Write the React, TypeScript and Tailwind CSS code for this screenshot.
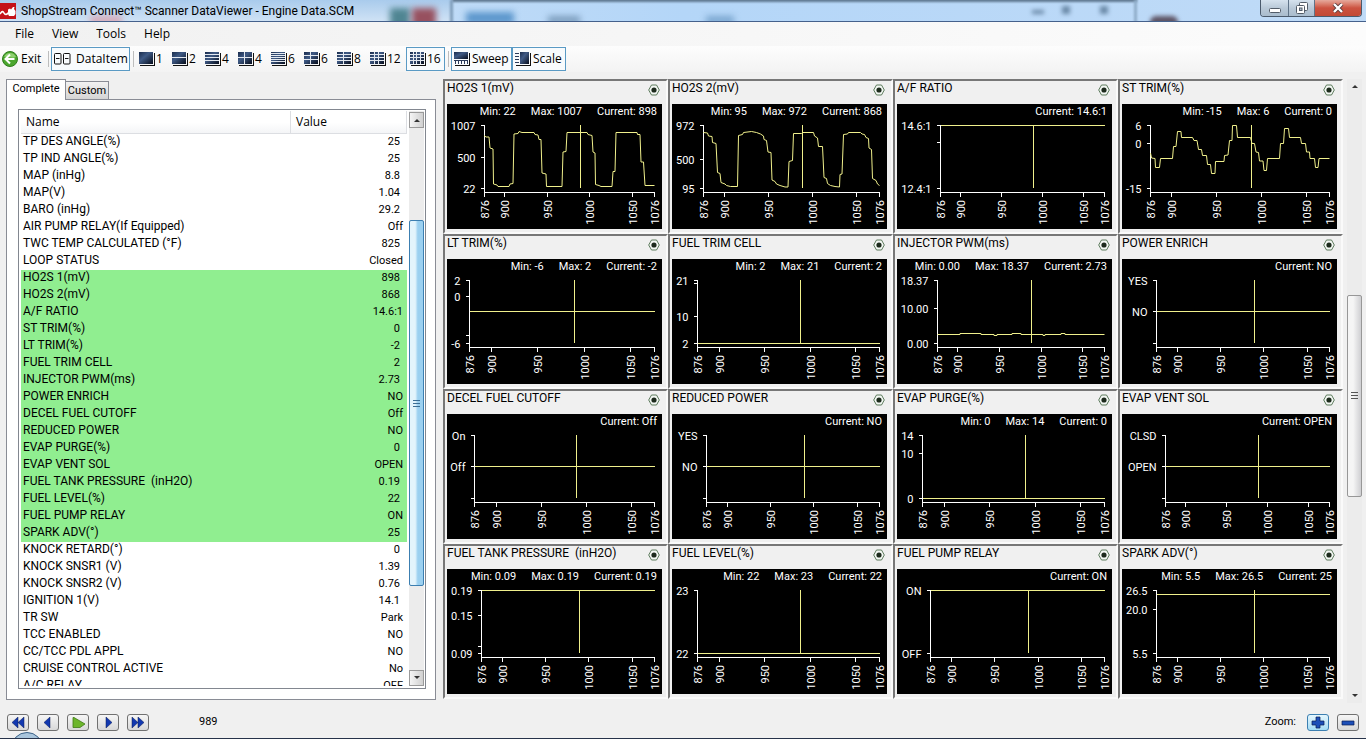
import React from 'react';

type Tick = [number, string];

interface Sensor {
    title: string;
    stats: string[];
    axisX: number;
    max: number;
    min: number;
    ticks: Tick[];
    level?: number;
    trace?: string;
}

interface Item {
    name: string;
    value: string;
    selected?: boolean;
}

const PLOT_RIGHT = 207.5;
const PLOT_TOP = 21.5;
const PLOT_BOTTOM = 84;
const CURSOR = 989;
const FRAMES = [876, 900, 950, 1000, 1050, 1076];

const sensors: Sensor[] = [
    {
        title: 'HO2S 1(mV)',
        stats: ['Min: 22', 'Max: 1007', 'Current: 898'],
        axisX: 37.5, max: 1007, min: 22,
        ticks: [[1007, '1007'], [500, '500'], [22, '22']],
        trace: '37,31.5 39,33 42,33 43,44 46,45 46.5,80 50,81 51,82.5 62,82.5 63,80 66,79.5 67,30 71,29.5 72,27.5 75,28.5 87,28.5 88,30.5 91,31 92,35.5 94,35.5 95,69 99,70 99.5,82.5 115,82.5 116,48 119,47.5 120,28.5 140,28.5 141,30.5 145,31.5 146,48 148,49 148.5,80.5 152,81.5 154,82.5 165,82.5 166,67.5 168,67.5 169,28.5 190,28.5 190.5,30.5 193,30.5 194,58 196.5,58 198,81.5 207.5,81.5',
    },
    {
        title: 'HO2S 2(mV)',
        stats: ['Min: 95', 'Max: 972', 'Current: 868'],
        axisX: 31.5, max: 972, min: 95,
        ticks: [[972, '972'], [500, '500'], [95, '95']],
        trace: '31.5,28.5 35.5,29 36.5,32 40,32.5 40.5,38.5 44,39.5 45.5,68.5 48,69.5 49,78.5 53,80 54.5,81.5 58.5,82.5 65.5,82.5 66.5,31.5 70.5,30.5 71.5,28.5 79.5,27.5 84.5,28.5 88.5,30 91.5,32 92,35.5 94.5,36.5 96,48 99,48.5 100,76 103,77.5 104.5,80 108,81.5 113,83 116,83 117,57.5 120.5,56.5 121.5,29.5 129.5,29.5 130.5,28.5 141.5,28.5 142.5,32 145.5,34 146.5,42.5 150.5,42.5 152,73.5 154.5,74.5 155.5,79.5 158.5,81.5 163,82.5 167.5,83 168,70.5 170,70 171.5,30.5 175.5,30 176.5,28.5 188.5,28.5 190,30 192.5,30.5 194,33.5 196.5,34.5 197,44 199.5,45.5 200.5,74.5 204,76.5 205.5,80 207.5,81.5',
    },
    {
        title: 'A/F RATIO',
        stats: ['Current: 14.6:1'],
        axisX: 43.5, max: 14.6, min: 12.4,
        ticks: [[14.6, '14.6:1'], [14, ''], [12.4, '12.4:1']],
        level: 14.6,
    },
    {
        title: 'ST TRIM(%)',
        stats: ['Min: -15', 'Max: 6', 'Current: 0'],
        axisX: 28.5, max: 6, min: -15,
        ticks: [[6, '6'], [0, '0'], [-15, '-15']],
        trace: '28.5,49 29.5,54 33,54.5 33.5,63.5 37.5,63.5 38.5,54.5 50.5,54.5 51.5,42.5 54,42.5 55.5,27.5 59,27.5 59.5,33.5 70.5,33.5 72,36.5 75,36.5 76.5,45.5 79.5,45.5 80.5,51.5 84.5,51.5 85.5,60.5 88.5,60.5 89.5,69.5 93,69.5 93.5,57.5 102,57.5 102.5,51.5 106,51 107.5,36.5 110,36.5 110.5,21.5 114.5,21.5 115.5,33.5 128.5,33.5 130,39.5 132.5,39.5 134,48 136.5,48.5 137.5,57 141,57 142,66.5 144.5,66.5 145.5,54.5 157.5,54.5 158.5,39.5 161.5,39.5 162.5,24.5 166.5,24.5 167.5,33.5 178.5,33.5 179.5,39.5 183.5,39.5 184.5,48 187.5,48 188,54.5 192.5,54.5 193.5,63.5 196,63.5 197,54.5 207.5,54.5',
    },
    {
        title: 'LT TRIM(%)',
        stats: ['Min: -6', 'Max: 2', 'Current: -2'],
        axisX: 22.5, max: 2, min: -6,
        ticks: [[2, '2'], [0, '0'], [-5, ''], [-6, '-6']],
        level: -2,
    },
    {
        title: 'FUEL TRIM CELL',
        stats: ['Min: 2', 'Max: 21', 'Current: 2'],
        axisX: 25.5, max: 21, min: 2,
        ticks: [[21, '21'], [20, ''], [10, '10'], [2, '2']],
        level: 2,
    },
    {
        title: 'INJECTOR PWM(ms)',
        stats: ['Min: 0.00', 'Max: 18.37', 'Current: 2.73'],
        axisX: 40.5, max: 18.37, min: 0,
        ticks: [[18.37, '18.37'], [10, '10.00'], [0, '0.00']],
        trace: '40.5,75.5 63,75.5 63,74.5 84,74.5 84,75.5 97,75.5 97,76.5 100,76.5 100,75.5 115,75.5 115,74.5 124,74.5 124,75.5 146,75.5 146,76.5 148,76.5 148,75.5 164,75.5 164,74.5 168,74.5 168,75.5 207.5,75.5',
    },
    {
        title: 'POWER ENRICH',
        stats: ['Current: NO'],
        axisX: 34.5, max: 2, min: 0,
        ticks: [[2, 'YES'], [1, 'NO'], [0, '']],
        level: 1,
    },
    {
        title: 'DECEL FUEL CUTOFF',
        stats: ['Current: Off'],
        axisX: 27.5, max: 2, min: 0,
        ticks: [[2, 'On'], [1, 'Off'], [0, '']],
        level: 1,
    },
    {
        title: 'REDUCED POWER',
        stats: ['Current: NO'],
        axisX: 34.5, max: 2, min: 0,
        ticks: [[2, 'YES'], [1, 'NO'], [0, '']],
        level: 1,
    },
    {
        title: 'EVAP PURGE(%)',
        stats: ['Min: 0', 'Max: 14', 'Current: 0'],
        axisX: 25.5, max: 14, min: 0,
        ticks: [[14, '14'], [10, '10'], [0, '0']],
        level: 0,
    },
    {
        title: 'EVAP VENT SOL',
        stats: ['Current: OPEN'],
        axisX: 43.5, max: 2, min: 0,
        ticks: [[2, 'CLSD'], [1, 'OPEN'], [0, '']],
        level: 1,
    },
    {
        title: 'FUEL TANK PRESSURE  (inH2O)',
        stats: ['Min: 0.09', 'Max: 0.19', 'Current: 0.19'],
        axisX: 34.5, max: 0.19, min: 0.09,
        ticks: [[0.19, '0.19'], [0.15, '0.15'], [0.1, ''], [0.09, '0.09']],
        level: 0.19,
    },
    {
        title: 'FUEL LEVEL(%)',
        stats: ['Min: 22', 'Max: 23', 'Current: 22'],
        axisX: 25.5, max: 23, min: 22,
        ticks: [[23, '23'], [22, '22']],
        level: 22,
    },
    {
        title: 'FUEL PUMP RELAY',
        stats: ['Current: ON'],
        axisX: 33.5, max: 1, min: 0,
        ticks: [[1, 'ON'], [0, 'OFF']],
        level: 1,
    },
    {
        title: 'SPARK ADV(°)',
        stats: ['Min: 5.5', 'Max: 26.5', 'Current: 25'],
        axisX: 34.5, max: 26.5, min: 5.5,
        ticks: [[26.5, '26.5'], [20, '20.0'], [5.5, '5.5']],
        level: 25,
    },
];

const items: Item[] = [
    {name: 'TP DES ANGLE(%)', value: '25'},
    {name: 'TP IND ANGLE(%)', value: '25'},
    {name: 'MAP (inHg)', value: '8.8'},
    {name: 'MAP(V)', value: '1.04'},
    {name: 'BARO (inHg)', value: '29.2'},
    {name: 'AIR PUMP RELAY(If Equipped)', value: 'Off'},
    {name: 'TWC TEMP CALCULATED (°F)', value: '825'},
    {name: 'LOOP STATUS', value: 'Closed'},
    {name: 'HO2S 1(mV)', value: '898', selected: true},
    {name: 'HO2S 2(mV)', value: '868', selected: true},
    {name: 'A/F RATIO', value: '14.6:1', selected: true},
    {name: 'ST TRIM(%)', value: '0', selected: true},
    {name: 'LT TRIM(%)', value: '-2', selected: true},
    {name: 'FUEL TRIM CELL', value: '2', selected: true},
    {name: 'INJECTOR PWM(ms)', value: '2.73', selected: true},
    {name: 'POWER ENRICH', value: 'NO', selected: true},
    {name: 'DECEL FUEL CUTOFF', value: 'Off', selected: true},
    {name: 'REDUCED POWER', value: 'NO', selected: true},
    {name: 'EVAP PURGE(%)', value: '0', selected: true},
    {name: 'EVAP VENT SOL', value: 'OPEN', selected: true},
    {name: 'FUEL TANK PRESSURE  (inH2O)', value: '0.19', selected: true},
    {name: 'FUEL LEVEL(%)', value: '22', selected: true},
    {name: 'FUEL PUMP RELAY', value: 'ON', selected: true},
    {name: 'SPARK ADV(°)', value: '25', selected: true},
    {name: 'KNOCK RETARD(°)', value: '0'},
    {name: 'KNOCK SNSR1 (V)', value: '1.39'},
    {name: 'KNOCK SNSR2 (V)', value: '0.76'},
    {name: 'IGNITION 1(V)', value: '14.1'},
    {name: 'TR SW', value: 'Park'},
    {name: 'TCC ENABLED', value: 'NO'},
    {name: 'CC/TCC PDL APPL', value: 'NO'},
    {name: 'CRUISE CONTROL ACTIVE', value: 'No'},
    {name: 'A/C RELAY', value: 'OFF'},
];

const layouts = [
    {count: 1, cols: 1, rows: 1},
    {count: 2, cols: 1, rows: 2},
    {count: 4, cols: 1, rows: 4},
    {count: 4, cols: 2, rows: 2},
    {count: 6, cols: 1, rows: 6},
    {count: 6, cols: 2, rows: 3},
    {count: 8, cols: 2, rows: 4},
    {count: 12, cols: 3, rows: 4},
    {count: 16, cols: 4, rows: 4},
];

const SensorChart: React.FC<{sensor: Sensor}> = ({sensor}) => {
    const {axisX, max, min, ticks, level, trace} = sensor;
    const toX = (frame: number) => Math.floor(axisX + ((frame - 876) / 200) * (PLOT_RIGHT - axisX)) + 0.5;
    const toY = (value: number) => Math.floor(PLOT_TOP + ((max - value) / (max - min)) * (PLOT_BOTTOM - PLOT_TOP)) + 0.5;

    return (
        <svg viewBox="0 16 215 109" className="block h-[109px] w-full" aria-hidden="true">
            <g stroke="#fff" fill="none" shapeRendering="crispEdges">
                <path d={`M${axisX} 21V88.5H${PLOT_RIGHT + 0.5}`}/>
                {ticks.map(([value]) => (
                    <path key={value} d={`M${axisX - 4} ${toY(value)}h4`}/>
                ))}
                {FRAMES.map((frame) => (
                    <path key={frame} d={`M${toX(frame)} 88v5`}/>
                ))}
            </g>
            <g className="fill-white text-[11px]">
                {ticks.map(([value, label]) => (
                    <text key={value} x={axisX - 9} y={toY(value) + 4} textAnchor="end">{label}</text>
                ))}
                {FRAMES.map((frame) => (
                    <text key={frame} textAnchor="end" transform={`translate(${toX(frame) + 4} 96) rotate(-90)`}>{frame}</text>
                ))}
            </g>
            <g stroke="#f0f08c" fill="none">
                {level !== undefined && <path d={`M${axisX} ${toY(level)}H208`} shapeRendering="crispEdges"/>}
                {trace && <polyline points={trace}/>}
                <path d={`M${toX(CURSOR)} 21V84`} shapeRendering="crispEdges"/>
            </g>
        </svg>
    );
};

const SensorCell: React.FC<{sensor: Sensor}> = ({sensor}) => {
    return (
        <section className="border-2 border-t-[#777] border-l-[#777] border-r-[#fafafa] border-b-[#fafafa] bg-[#f0f0f0] pb-[3px] pl-[2px] pr-[4px]">
            <div className="flex h-[23px] justify-between">
                <h2 className="whitespace-pre text-[12px] leading-[14px]">{sensor.title}</h2>
                <button aria-label="Sensor options" className="mt-[3px] mr-[2px] h-3 w-3">
                    <svg viewBox="0 0 12 12" className="block h-3 w-3">
                        <path d="M3.5 1h5L11.3 6 8.500 11h-5L.7 6z" fill="#f4f8f4" stroke="#5c7a5c"/>
                        <circle cx="6" cy="6" r="2.6" fill="#1c2a1c"/>
                    </svg>
                </button>
            </div>
            <div className="bg-black">
                <div className="flex h-4 justify-end gap-[15px] pr-[5px] text-[11px] leading-[15px] whitespace-nowrap text-white">
                    {sensor.stats.map((stat) => (
                        <span key={stat}>{stat}</span>
                    ))}
                </div>
                <SensorChart sensor={sensor}/>
            </div>
        </section>
    );
};

const LayoutIcon: React.FC<{cols: number; rows: number}> = ({cols, rows}) => {
    return (
        <svg viewBox="0 0 16 14" className="h-[14px] w-4" shapeRendering="crispEdges">
            <defs>
                <linearGradient id="screen" x1="0" y1="0" x2="1" y2="1">
                    <stop offset="0" stopColor="#1a2c4c"/>
                    <stop offset="0.4" stopColor="#3f5a85"/>
                    <stop offset="1" stopColor="#060d1c"/>
                </linearGradient>
            </defs>
            <path d="M1 13.5h14.5V1" fill="none" stroke="#111"/>
            <rect width="14" height="12" fill="url(#screen)"/>
            {Array.from({length: cols - 1}, (_, i) => (
                <rect key={i} x={Math.round(((i + 1) * 14) / cols) - 1} y="0" width="1" height="12" fill="#e4e9f0"/>
            ))}
            {Array.from({length: rows - 1}, (_, i) => (
                <rect key={i} x="0" y={Math.round(((i + 1) * 12) / rows) - 1} width="14" height="1" fill="#e4e9f0"/>
            ))}
        </svg>
    );
};

const Arrow: React.FC<{down?: boolean}> = ({down}) => {
    return (
        <svg viewBox="0 0 8 4" className="h-1 w-2">
            <path d={down ? 'M1 0h6L4 3z' : 'M1 4h6L4 1z'} fill="#333"/>
        </svg>
    );
};

const TitleBar: React.FC = () => {
    return (
        <header className="relative flex h-[22px] items-center overflow-hidden border-b border-[#45618c] bg-linear-to-r from-[#d3e4f5] via-[#b4d6f8] to-[#c0dbf7]">
            <div className="absolute inset-y-0 left-0 w-[452px] bg-linear-to-b from-[#a9cbec] to-[#cfe2f5]"/>
            <div className="absolute left-[390px] top-2 h-5 w-5 bg-[#4f8592] blur-[3px]"/>
            <div className="absolute left-[412px] top-2 h-5 w-6 bg-[#97505f] blur-[3px]"/>
            <div className="absolute left-[90px] top-4 h-2 w-8 bg-[#d6a6b4] blur-[3px]"/>
            <div className="absolute left-[452px] -top-1 h-[6px] w-[685px] bg-[#5f7890] blur-[1px]"/>
            <div className="absolute left-[450px] top-0 h-6 w-[3px] bg-[#7f9dba] blur-[1px]"/>
            <div className="absolute left-[466px] top-3 h-3 w-12 bg-[#5c97cc] blur-[3px]"/>
            <div className="absolute left-[548px] top-4 h-2 w-8 bg-[#7c9dbd] blur-[3px]"/>
            <div className="absolute left-[706px] top-4 h-2 w-7 bg-[#7aa6cf] blur-[3px]"/>
            <div className="absolute left-[1032px] top-[10px] h-1 w-3 bg-[#6b8aa8] blur-[2px]"/>
            <div className="absolute left-[1062px] top-[6px] h-2 w-2 bg-[#6b8aa8] blur-[2px]"/>
            <div className="absolute left-[1100px] top-[6px] h-2 w-2 bg-[#6b8aa8] blur-[2px]"/>
            <div className="absolute left-[1134px] top-0 h-6 w-[3px] bg-[#8fadc9] blur-[1px]"/>
            <div className="absolute left-[1150px] top-4 h-3 w-7 rounded-full bg-[#5e5566] blur-[2px]"/>
            <svg viewBox="0 0 16 16" className="relative h-4 w-4">
                <rect width="16" height="16" fill="#c4121a"/>
                <path d="M0 11c2-3 3-3 4-1s3 2 5-1" fill="none" stroke="#fff" strokeWidth="1.6"/>
                <path d="M8 6.500l2-1 1 1 2-2.500h1.500L14 6l1.500 2v3L14 13H9l-1-2z" fill="#fff"/>
            </svg>
            <h1 className="relative ml-[5px] flex-1 text-[12px] text-black">ShopStream Connect™ Scanner DataViewer - Engine Data.SCM</h1>
            <div className="relative mr-1 flex h-[17px] self-start overflow-hidden rounded-b border border-t-0 border-[#4a5a6c]">
                <button aria-label="Minimize" className="flex w-7 items-center justify-center border-r border-[#5f7388] bg-linear-to-b from-[#d5e2ee] via-[#b9c9d8] to-[#a9bccd]">
                    <svg viewBox="0 0 12 5" className="mt-1 h-[5px] w-3"><rect x=".5" y=".5" width="11" height="4" rx="1" fill="#fff" stroke="#525c68"/></svg>
                </button>
                <button aria-label="Restore" className="flex w-[26px] items-center justify-center border-r border-[#5f7388] bg-linear-to-b from-[#d5e2ee] via-[#b9c9d8] to-[#a9bccd]">
                    <svg viewBox="0 0 12 12" className="h-3 w-3" stroke="#525c68">
                        <rect x="3.5" y=".5" width="8" height="8" rx="1" fill="#fff"/>
                        <rect x=".5" y="3.5" width="8" height="8" rx="1" fill="#fff"/>
                        <rect x="3.5" y="6" width="2.5" height="2.5" fill="#b0c0d0"/>
                    </svg>
                </button>
                <button aria-label="Close" className="flex w-[46px] items-center justify-center bg-linear-to-b from-[#e5a99c] via-[#cc5240] to-[#c24a35]">
                    <svg viewBox="0 0 12 10" className="h-[10px] w-3"><path d="M2 1l8 8M10 1L2 9" stroke="#5a3c3c" strokeWidth="4"/><path d="M2 1l8 8M10 1L2 9" stroke="#fff" strokeWidth="2.4"/></svg>
                </button>
            </div>
        </header>
    );
};

const Toolbar: React.FC = () => {
    return (
        <div className="flex h-[26px] items-center bg-linear-to-b from-[#fdfdfd] to-[#f3f3f3] pl-[2px]">
            <button className="flex w-[45px] items-center gap-[3px]">
                <svg viewBox="0 0 16 16" className="h-4 w-4">
                    <circle cx="8" cy="8" r="7.5" fill="#4ba62e" stroke="#2f7d1c"/>
                    <path d="M2 6a6.500 6.500 0 0 1 12 0c-4 2-8-1-12 0z" fill="#8fd070"/>
                    <path d="M8 3.500L3.500 8 8 12.500M4 8h8.500" fill="none" stroke="#fff" strokeWidth="2"/>
                </svg>
                Exit
            </button>
            <div className="mr-[2px] ml-px h-4 w-px bg-[#bdbdbd]"/>
            <button className="flex h-6 w-[79px] items-center gap-[5px] border border-[#5a9ac4] bg-[#f8fbfd] pl-[2px]">
                <svg viewBox="0 0 17 12" className="h-3 w-[17px]" fill="none" stroke="#111">
                    <rect x=".5" y=".5" width="6.5" height="10.5" rx="1"/>
                    <rect x="9.5" y=".5" width="6.5" height="10.5" rx="1"/>
                    <path d="M2 5.5h3.5M11 5.5h3.5"/>
                </svg>
                DataItem
            </button>
            <div className="mr-[5px] ml-[3px] h-4 w-px bg-[#bdbdbd]"/>
            {layouts.map(({count, cols, rows}) => (
                <button
                    key={`${cols}x${rows}`}
                    className={count === 16
                        ? 'ml-px flex h-6 w-[39px] items-center gap-px border border-[#5a9ac4] bg-[#f8fbfd] pl-[3px]'
                        : count === 12
                            ? 'flex w-[35px] items-center gap-px'
                            : 'flex w-[33px] items-center gap-px'}
                >
                    <LayoutIcon cols={cols} rows={rows}/>
                    {count}
                </button>
            ))}
            <div className="mr-[2px] ml-[3px] h-4 w-px bg-[#bdbdbd]"/>
            <button className="flex h-6 w-[61px] items-center gap-[2px] border border-[#5a9ac4] bg-[#f8fbfd] pl-[2px]">
                <svg viewBox="0 0 16 14" className="h-[14px] w-4" shapeRendering="crispEdges">
                    <path d="M1 13.5h14.5V1" fill="none" stroke="#111"/>
                    <rect width="14" height="7" fill="url(#screen)"/>
                    <path d="M1.5 8v4M4.500 8v4M7.500 8v4M10.500 8v4M13.500 8v4M0 8.500h14" stroke="#2a3a5a"/>
                </svg>
                Sweep
            </button>
            <button className="flex h-6 w-[54px] items-center gap-[2px] border border-[#5a9ac4] bg-[#f8fbfd] pl-[2px]">
                <svg viewBox="0 0 16 14" className="h-[14px] w-4" shapeRendering="crispEdges">
                    <path d="M1 13.5h14.5V1" fill="none" stroke="#111"/>
                    <rect x="5" width="9" height="12" fill="url(#screen)"/>
                    <path d="M0 1.5h4M0 4.500h4M0 7.500h4M0 10.500h4" stroke="#2a3a5a"/>
                </svg>
                Scale
            </button>
        </div>
    );
};

const DataPanel: React.FC = () => {
    return (
        <aside className="flex w-[430px] shrink-0 flex-col">
            <div role="tablist" className="flex items-end text-[11px]">
                <button role="tab" aria-selected="true" className="z-10 -mb-px h-[21px] w-[60px] border border-b-0 border-[#898c95] bg-white pb-[2px] leading-4">Complete</button>
                <button role="tab" aria-selected="false" className="h-[18px] w-[43px] border border-b-0 border-l-0 border-[#898c95] bg-linear-to-b from-[#f2f2f2] to-[#d4d4d4] leading-4">Custom</button>
            </div>
            <div className="flex min-h-0 flex-1 flex-col border border-[#898c95] bg-white pt-[9px] pr-[9px] pb-[10px] pl-[11px]">
                <div className="flex min-h-0 flex-1 border border-[#828790] pt-px pr-px pb-[2px] pl-[2px]">
                    <div className="min-w-0 flex-1 overflow-hidden">
                        <table className="w-full table-fixed border-separate border-spacing-0">
                            <thead>
                                <tr className="h-[23px] bg-linear-to-b from-white from-50% to-[#f3f4f6] text-left font-['Open_Sans','Noto_Sans',sans-serif] text-[12px] leading-[18px]">
                                    <th className="w-[270px] border-r border-b border-[#dcdee2] p-0 pl-[5px] font-normal">Name</th>
                                    <th className="border-r border-b border-[#dcdee2] p-0 pl-[5px] font-normal">Value</th>
                                </tr>
                            </thead>
                            <tbody>
                                {items.map((item) => (
                                    <tr key={item.name} className={item.selected ? 'h-[17px] bg-[#90ee90] align-top' : 'h-[17px] align-top'}>
                                        <td className="p-0 pl-[2px] text-[12px] leading-[15px] whitespace-pre">{item.name}</td>
                                        <td className={/^[\d.-]+$/.test(item.value) ? 'p-0 pr-[7px] text-right text-[11px] leading-[15px]' : 'p-0 pr-[4px] text-right text-[11px] leading-[15px]'}>{item.value}</td>
                                    </tr>
                                ))}
                            </tbody>
                        </table>
                    </div>
                    <div className="ml-[2px] flex w-[15px] flex-col bg-[#ececec]">
                        <button aria-label="Scroll up" className="mt-px flex h-4 items-center justify-center border border-[#9a9a9a] bg-linear-to-r from-[#f5f5f5] to-[#d0d0d0]"><Arrow/></button>
                        <div className="flex-93"/>
                        <div className="flex flex-366 flex-col items-center justify-center gap-[2px] rounded-xs border border-[#3c7fb1] bg-linear-to-r from-[#e3f4fc] from-40% to-[#9bd0f0] to-60%">
                            <div className="h-px w-[7px] bg-[#3c6f96]"/>
                            <div className="h-px w-[7px] bg-[#3c6f96]"/>
                            <div className="h-px w-[7px] bg-[#3c6f96]"/>
                        </div>
                        <div className="flex-84"/>
                        <button aria-label="Scroll down" className="flex h-4 items-center justify-center border border-[#9a9a9a] bg-linear-to-r from-[#f5f5f5] to-[#d0d0d0]"><Arrow down/></button>
                    </div>
                </div>
            </div>
        </aside>
    );
};

interface NavProps {
    label: string;
    children: React.ReactNode;
    active?: boolean;
}

const NavButton: React.FC<NavProps> = ({label, children, active}) => {
    return (
        <button
            aria-label={label}
            className={active
                ? 'flex h-[17px] w-[22px] items-center justify-center rounded-[3px] border border-[#3c7fb1] bg-linear-to-b from-[#e4f6fd] to-[#a5dcf5]'
                : 'flex h-[17px] w-[22px] items-center justify-center rounded-[3px] border border-[#707070] bg-linear-to-b from-[#f6f6f6] to-[#d8d8d8]'}
        >
            <svg viewBox="0 0 16 13" className="h-[13px] w-4">{children}</svg>
        </button>
    );
};

const Footer: React.FC = () => {
    return (
        <footer className="relative flex h-9 items-center overflow-hidden border-b border-[#26324a] pt-[4px] pr-[7px] pl-[7px]">
            <div className="absolute -bottom-[26px] left-[11px] h-8 w-8 rounded-full border border-[#3b6288] bg-[#a9c5dc]"/>
            <div className="flex gap-2">
                <NavButton label="First frame"><path d="M8 1v11L2 6.500zM14 1v11L8 6.500z" fill="#1238b0" stroke="#0a1a50" strokeWidth=".5"/></NavButton>
                <NavButton label="Previous frame"><path d="M10 1v11L4 6.500z" fill="#1238b0" stroke="#0a1a50" strokeWidth=".5"/></NavButton>
                <NavButton label="Play"><path d="M3 1.500v10h7L15 8 4 1.500z" fill="#6cb52a" stroke="#3f7a14" strokeWidth=".8"/></NavButton>
                <NavButton label="Next frame"><path d="M6 1v11l6-5.500z" fill="#1238b0" stroke="#0a1a50" strokeWidth=".5"/></NavButton>
                <NavButton label="Last frame"><path d="M2 1v11l6-5.500zM8 1v11l6-5.500z" fill="#1238b0" stroke="#0a1a50" strokeWidth=".5"/></NavButton>
            </div>
            <output className="ml-[50px] flex-1 text-[11px]">989</output>
            <span className="mr-[11px] text-[11px]">Zoom:</span>
            <div className="flex gap-2">
                <NavButton label="Zoom in" active><path d="M6 1h4v4h4v4h-4v3H6V9H2V5h4z" fill="#1d4fb8" stroke="#0a1a50" strokeWidth=".7"/></NavButton>
                <NavButton label="Zoom out"><path d="M2 5h12v4H2z" fill="#1d4fb8" stroke="#0a1a50" strokeWidth=".7"/></NavButton>
            </div>
        </footer>
    );
};

const App: React.FC = () => {
    return (
        <div className="flex h-screen flex-col overflow-hidden bg-[#f0f0f0] font-[Roboto,sans-serif] text-black">
            <TitleBar/>
            <div className="font-['Open_Sans','Noto_Sans',sans-serif] text-[12px]">
                <nav className="flex h-6 items-center gap-[18px] bg-linear-to-r from-[#f1f1f1] to-[#fcfcfc] pl-[15px]">
                    <button>File</button>
                    <button>View</button>
                    <button>Tools</button>
                    <button>Help</button>
                </nav>
                <Toolbar/>
            </div>
            <main className="flex min-h-0 flex-1 pt-[7px] pl-[6px] pr-1">
                <div className="flex pb-[3px]">
                    <DataPanel/>
                </div>
                <div className="ml-[7px] grid min-w-0 flex-1 grid-cols-4 content-start">
                    {sensors.map((sensor) => (
                        <SensorCell key={sensor.title} sensor={sensor}/>
                    ))}
                </div>
                <div className="ml-1 flex w-[15px] flex-col bg-[#ececec]">
                    <button aria-label="Scroll up" className="flex h-[14px] items-center justify-center"><Arrow/></button>
                    <div className="flex-203"/>
                    <div className="flex flex-200 flex-col items-center justify-center gap-[2px] rounded-xs border border-[#979797] bg-linear-to-r from-[#f5f5f5] from-40% to-[#cfcfd2]">
                        <div className="h-px w-[7px] bg-[#555]"/>
                        <div className="h-px w-[7px] bg-[#555]"/>
                        <div className="h-px w-[7px] bg-[#555]"/>
                    </div>
                    <div className="flex-193"/>
                    <button aria-label="Scroll down" className="flex h-[14px] items-center justify-center"><Arrow down/></button>
                </div>
            </main>
            <Footer/>
        </div>
    );
};

export default App;
